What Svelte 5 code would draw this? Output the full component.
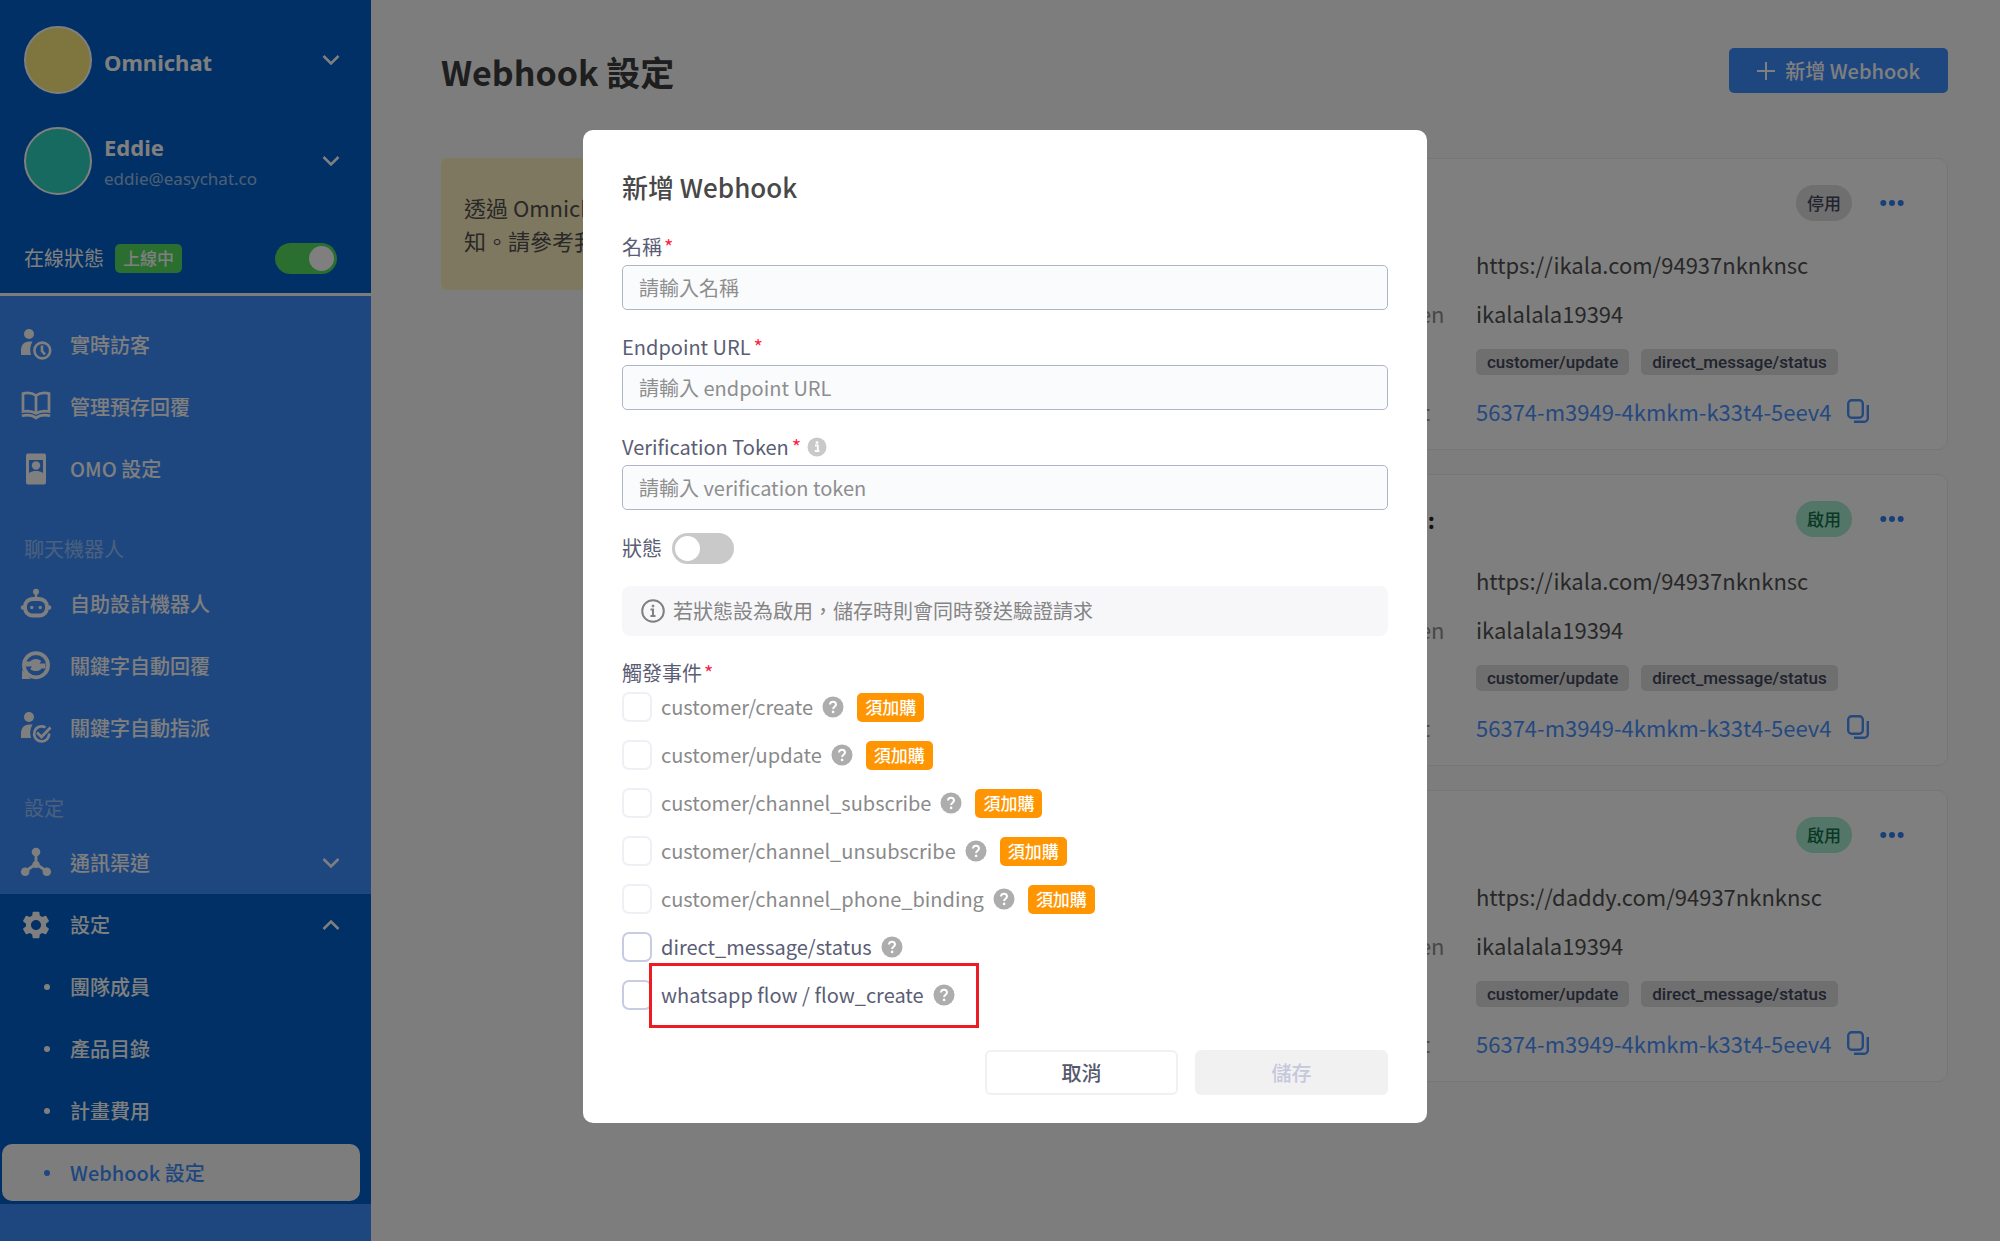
<script>
  const webhooks = [
    { name: 'iKala', on: false, url: 'https://ikala.com/94937nknknsc' },
    { name: 'iKala Webhook :', on: true, url: 'https://ikala.com/94937nknknsc' },
    { name: 'Daddy', on: true, url: 'https://daddy.com/94937nknknsc' }
  ];

  const groups = [
    {
      title: '',
      items: [
        { icon: 'visitor', label: '實時訪客' },
        { icon: 'book', label: '管理預存回覆' },
        { icon: 'omo', label: 'OMO 設定' }
      ]
    },
    {
      title: '聊天機器人',
      items: [
        { icon: 'robot', label: '自助設計機器人' },
        { icon: 'reply', label: '關鍵字自動回覆' },
        { icon: 'assign', label: '關鍵字自動指派' }
      ]
    },
    {
      title: '設定',
      items: [{ icon: 'hub', label: '通訊渠道', expandable: true }]
    }
  ];

  const settings = [
    { label: '團隊成員' },
    { label: '產品目錄' },
    { label: '計畫費用' },
    { label: 'Webhook 設定', current: true }
  ];

  const fields = [
    { id: 'name', label: '名稱', hint: '請輸入名稱' },
    { id: 'endpoint', label: 'Endpoint URL', hint: '請輸入 endpoint URL' },
    { id: 'token', label: 'Verification Token', hint: '請輸入 verification token', info: true }
  ];

  const events = [
    { name: 'customer/create', paid: true },
    { name: 'customer/update', paid: true },
    { name: 'customer/channel_subscribe', paid: true },
    { name: 'customer/channel_unsubscribe', paid: true },
    { name: 'customer/channel_phone_binding', paid: true },
    { name: 'direct_message/status' },
    { name: 'whatsapp flow / flow_create', marked: true }
  ];
</script>

{#snippet chevron(up)}
  <svg class="chevron" viewBox="0 0 18 18" aria-hidden="true">
    <path d={up ? 'M1.500 13l7.500-7.500 7.500 7.500' : 'M1.500 5l7.500 7.500 7.500-7.500'} fill="none" stroke="currentColor" stroke-width="2.500" />
  </svg>
{/snippet}

{#snippet navIcon(kind)}
  <svg class="nav-icon" viewBox="0 0 32 32" fill="currentColor" aria-hidden="true">
    {#if kind === 'visitor'}
      <circle cx="9" cy="5" r="5" />
      <path d="M1 26v-4c0-6 3-9.500 8-9.500h3.500c-2.500 4-3 9-1.500 13.500z" />
      <circle cx="22.300" cy="21.500" r="7.900" fill="none" stroke="currentColor" stroke-width="2.600" />
      <path d="M22 16.500v5.500l3 3.500" fill="none" stroke="currentColor" stroke-width="2.600" />
    {:else if kind === 'book'}
      <path d="M16 4.500C12 1.800 7 1.600 3 2.500V20.500C7.500 19.600 12 19.800 16 22.500C20 19.800 24.500 19.600 29 20.500V2.500C25 1.600 20 1.800 16 4.500zV22" fill="none" stroke="currentColor" stroke-width="2.700" />
      <path d="M1.800 24.800c6-1.200 10.500-.8 14.200 2.200c3.700-3 8.200-3.400 14.200-2.200" fill="none" stroke="currentColor" stroke-width="2.700" />
    {:else if kind === 'omo'}
      <path fill-rule="evenodd" d="M8 .5h16a2 2 0 0 1 2 2v27a2 2 0 0 1-2 2H8a2 2 0 0 1-2-2v-27a2 2 0 0 1 2-2zM9 7v13c4-2.600 10-2.600 14 0V7z" />
      <circle cx="16" cy="12.500" r="4.200" />
    {:else if kind === 'robot'}
      <circle cx="16" cy="3.700" r="3" />
      <path d="M14.800 5h2.400v6h-2.400z" />
      <rect x="5" y="11" width="22" height="16.500" rx="7.500" fill="none" stroke="currentColor" stroke-width="3.800" />
      <circle cx="3" cy="19.500" r="2.300" />
      <circle cx="29" cy="19.500" r="2.300" />
      <circle cx="11.800" cy="19.500" r="1.700" />
      <circle cx="20.200" cy="19.500" r="1.700" />
    {:else if kind === 'reply'}
      <circle cx="16" cy="15.200" r="12.100" fill="none" stroke="currentColor" stroke-width="3.700" />
      <path d="M2 20v9h9z" />
      <path d="M6 11.500h4c2.500-3.200 8-3.600 11.300-.5l-1.800 2.500h6v5h-4c-2.500 3.200-8 3.600-11.300.5l1.800-2.500H6z" />
    {:else if kind === 'assign'}
      <circle cx="9" cy="5" r="5" />
      <path d="M1 26v-4c0-6 3-9.500 8-9.500h3.500c-2.500 4-3 9-1.500 13.500z" />
      <path d="M25.500 15.500a7.500 7.500 0 1 0 3.600 6" fill="none" stroke="currentColor" stroke-width="2.600" />
      <path d="M17 20.500l4.500 4.500 9-9.500" fill="none" stroke="currentColor" stroke-width="2.800" />
    {:else if kind === 'hub'}
      <path d="M16 6v11L5 24.500M16 17l11 7.500" fill="none" stroke="currentColor" stroke-width="2.800" />
      <circle cx="16" cy="5" r="4.300" />
      <circle cx="16" cy="17.500" r="3.600" />
      <circle cx="5.200" cy="24.700" r="4.300" />
      <circle cx="26.800" cy="24.700" r="4.300" />
    {/if}
  </svg>
{/snippet}

{#snippet help()}
  <svg class="help" viewBox="0 0 22 22" aria-hidden="true">
    <circle cx="11" cy="11" r="10.500" fill="#adadad" />
    <path d="M8 8.600c0-3.800 6-3.800 6 0c0 2.100-2.900 2.200-2.900 4.300" fill="none" stroke="#fff" stroke-width="2" />
    <circle cx="11.100" cy="15.900" r="1.300" fill="#fff" />
  </svg>
{/snippet}

<div class="app">
  <aside class="sidebar">
    <div class="account">
      <button class="profile">
        <span class="avatar yellow"></span>
        <span class="who"><strong>Omnichat</strong></span>
        {@render chevron(false)}
      </button>
      <button class="profile">
        <span class="avatar teal"></span>
        <span class="who"><strong>Eddie</strong><span class="email">eddie@easychat.co</span></span>
        {@render chevron(false)}
      </button>
      <div class="presence">
        <label for="online">在線狀態</label>
        <span class="tag green">上線中</span>
        <input id="online" class="switch" type="checkbox" checked />
      </div>
    </div>

    <nav>
      {#each groups as group}
        {#if group.title}<h2>{group.title}</h2>{/if}
        {#each group.items as item}
          <a class="row" href="#{item.icon}">
            {@render navIcon(item.icon)}
            <span class="text">{item.label}</span>
            {#if item.expandable}{@render chevron(false)}{/if}
          </a>
        {/each}
      {/each}
      <div class="open">
        <a class="row" href="#settings">
          <svg class="nav-icon" viewBox="0.5 0.5 23 23" fill="currentColor" aria-hidden="true">
            <path d="M19.140 12.940c.04-.3.060-.610.060-.940 0-.320-.020-.640-.070-.940l2.030-1.580c.180-.140.230-.410.120-.610l-1.920-3.320c-.120-.220-.370-.290-.590-.220l-2.390.960c-.5-.380-1.030-.7-1.620-.940l-.360-2.540c-.040-.240-.240-.410-.480-.410h-3.840c-.240 0-.430.170-.470.410l-.360 2.540c-.590.240-1.130.570-1.620.940l-2.390-.960c-.220-.080-.470 0-.590.220L2.740 8.870c-.120.210-.080.470.120.610l2.030 1.580c-.050.3-.090.630-.090.940s.020.640.070.940l-2.030 1.580c-.180.140-.230.410-.120.610l1.920 3.320c.120.220.370.290.590.220l2.390-.960c.5.380 1.030.7 1.620.940l.360 2.540c.050.240.240.410.480.410h3.840c.240 0 .440-.170.470-.410l.360-2.540c.590-.240 1.130-.560 1.620-.940l2.390.960c.220.080.470 0 .590-.220l1.920-3.320c.120-.220.070-.470-.120-.610l-2.010-1.580zM12 15.600c-1.980 0-3.600-1.620-3.600-3.600s1.620-3.600 3.600-3.600 3.600 1.620 3.600 3.600-1.620 3.600-3.600 3.600z" />
          </svg>
          <span class="text">設定</span>
          {@render chevron(true)}
        </a>
        {#each settings as item}
          <a class="row sub" class:current={item.current} href="#{item.label}">
            <span class="dot"></span>
            <span class="text">{item.label}</span>
          </a>
        {/each}
      </div>
    </nav>
  </aside>

  <main>
    <header>
      <h1>Webhook 設定</h1>
      <button class="add">
        <svg viewBox="0 0 18 18" aria-hidden="true"><path d="M9 0v18M0 9h18" stroke="currentColor" stroke-width="2" /></svg>
        新增 Webhook
      </button>
    </header>
    <div class="content">
      <p class="note">透過 Omnichat Webhook，您可以在指定事件發生時收到即時通<br />知。請參考我們的 Webhook 文件以了解更多。</p>
      <div class="cards">
        {#each webhooks as hook}
          <article>
            <div class="card-head">
              <h3>{hook.name}</h3>
              <span class="state" class:on={hook.on}>{hook.on ? '啟用' : '停用'}</span>
              <button class="more" aria-label="更多">
                <svg viewBox="0 0 24 8" fill="currentColor"><circle cx="3.300" cy="4" r="3" /><circle cx="12" cy="4" r="3" /><circle cx="20.700" cy="4" r="3" /></svg>
              </button>
            </div>
            <dl>
              <dt>Endpoint URL</dt>
              <dd>{hook.url}</dd>
              <dt>Verification Token</dt>
              <dd>ikalalala19394</dd>
              <dt>觸發事件</dt>
              <dd><span class="chip">customer/update</span><span class="chip">direct_message/status</span></dd>
              <dt>Signature Secret</dt>
              <dd class="secret">
                <span>56374-m3949-4kmkm-k33t4-5eev4</span>
                <button class="copy" aria-label="複製">
                  <svg viewBox="0 0 22 24" fill="none" stroke="currentColor" stroke-width="2.400">
                    <rect x="1.200" y="1.200" width="14.600" height="17.600" rx="3.500" />
                    <path d="M20.800 6v13.300a3.500 3.500 0 0 1-3.500 3.500H7" />
                  </svg>
                </button>
              </dd>
            </dl>
          </article>
        {/each}
      </div>
    </div>
  </main>
</div>

<div class="overlay">
  <div class="modal" role="dialog" aria-modal="true" aria-labelledby="dialog-title">
    <h2 id="dialog-title">新增 Webhook</h2>

    {#each fields as field}
      <div class="field">
        <label for={field.id}>
          <span>{field.label}<i>*</i></span>
          {#if field.info}
            <svg viewBox="0 0 20 20" aria-hidden="true">
              <circle cx="10" cy="10" r="9.500" fill="#c9c9c9" />
              <path d="M8 8.500h2.800v5.500M7.800 14h4.600" fill="none" stroke="#fff" stroke-width="1.800" />
              <circle cx="10" cy="5.600" r="1.400" fill="#fff" />
            </svg>
          {/if}
        </label>
        <input id={field.id} type="text" placeholder={field.hint} />
      </div>
    {/each}

    <div class="status">
      <label for="enabled">狀態</label>
      <input id="enabled" class="switch" type="checkbox" />
    </div>

    <p class="info">
      <svg viewBox="0 0 24 24" fill="none" stroke="#808080" stroke-width="2" aria-hidden="true">
        <circle cx="12" cy="12" r="10.800" />
        <path d="M9.500 10.500H12V17M9.500 17h5" />
        <circle cx="12" cy="7" r="1" fill="#808080" stroke-width="1" />
      </svg>
      若狀態設為啟用，儲存時則會同時發送驗證請求
    </p>

    <fieldset>
      <legend>觸發事件<i>*</i></legend>
      {#each events as event}
        <div class="event" class:locked={event.paid}>
          <label>
            <input type="checkbox" disabled={event.paid} />
            <span class="name" class:marked={event.marked}>{event.name}{@render help()}</span>
          </label>
          {#if event.paid}<span class="tag orange">須加購</span>{/if}
        </div>
      {/each}
    </fieldset>

    <div class="actions">
      <button class="cancel">取消</button>
      <button class="save" disabled>儲存</button>
    </div>
  </div>
</div>

<style>
  :global(body) {
    background: #fafafa;
  }

  .app,
  .overlay {
    font-family: 'Noto Sans CJK TC', sans-serif;
    font-size: 20px;
    line-height: 24px;
  }

  .app *,
  .overlay,
  .overlay * {
    box-sizing: border-box;
  }

  button,
  input {
    font: inherit;
    color: inherit;
    margin: 0;
  }

  button {
    border: 0;
    padding: 0;
    background: none;
  }

  a {
    color: inherit;
    text-decoration: none;
  }

  h1,
  h2,
  h3,
  p,
  dl,
  dd {
    margin: 0;
  }

  .app {
    display: flex;
    min-height: 100vh;
  }

  .sidebar {
    flex: 0 0 371px;
    background: #3e8eff;
    color: #fff;
  }

  .account {
    display: flex;
    flex-direction: column;
    padding: 26px 34px 19px 24px;
    background: #0060cc;
    border-bottom: 3px solid #fafafa;
  }

  .profile {
    display: flex;
    align-items: center;
    gap: 12px;
    margin-bottom: 33px;
    text-align: left;
    font-family: 'Noto Sans', sans-serif;
  }

  .profile:nth-child(2) {
    margin-bottom: 47px;
  }

  .avatar {
    width: 68px;
    height: 68px;
    border: 2px solid #fff;
    border-radius: 50%;
  }

  .yellow {
    background: #ffea7e;
  }

  .teal {
    background: #2cd4c0;
  }

  .who {
    flex: 1;
    display: flex;
    flex-direction: column;
    padding-top: 4px;
  }

  .who strong {
    font-size: 22px;
    line-height: 32px;
  }

  .email {
    font-size: 17px;
    line-height: 32px;
    opacity: 0.6;
  }

  .chevron {
    width: 18px;
    height: 18px;
    margin-right: -3px;
  }

  .presence {
    display: flex;
    align-items: center;
    height: 32px;
    gap: 11px;
  }

  .presence .switch {
    margin-left: auto;
  }

  .tag {
    display: flex;
    align-items: center;
    height: 29px;
    padding: 0 8px;
    border-radius: 5px;
    color: #fff;
    font-size: 17px;
    font-weight: 500;
  }

  .green {
    background: #54dc60;
  }

  .orange {
    background: #ff9500;
  }

  .switch {
    appearance: none;
    display: flex;
    align-items: center;
    width: 62px;
    height: 31px;
    padding: 3px;
    border-radius: 16px;
    background: #c9c9c9;
  }

  .switch::before {
    content: '';
    width: 25px;
    height: 25px;
    border-radius: 50%;
    background: #fff;
  }

  .switch:checked {
    justify-content: flex-end;
    background: #54dc60;
  }

  nav {
    padding-top: 18px;
    font-weight: 500;
  }

  nav h2 {
    margin-top: 24px;
    padding-left: 24px;
    font-size: 20px;
    line-height: 49px;
    font-weight: 400;
    opacity: 0.45;
  }

  .row {
    display: flex;
    align-items: center;
    gap: 18px;
    height: 62px;
    padding: 0 34px 0 20px;
  }

  .row .text {
    flex: 1;
  }

  .nav-icon {
    width: 32px;
    height: 32px;
  }

  .open {
    padding-bottom: 3px;
    background: #0060cc;
  }

  .row.sub {
    gap: 20px;
    padding-left: 44px;
  }

  .dot {
    width: 6px;
    height: 6px;
    border-radius: 50%;
    background: currentColor;
  }

  .row.current {
    height: 57px;
    margin: 2px 11px 0 2px;
    padding-left: 42px;
    border-radius: 10px;
    background: #fafafa;
    color: #3e8eff;
  }

  main {
    flex: 1;
    min-width: 0;
    padding: 48px 52px 48px 70px;
    color: #505050;
  }

  header {
    display: flex;
    align-items: center;
    justify-content: space-between;
    margin-bottom: 65px;
  }

  h1 {
    padding-top: 3px;
    font-size: 34px;
    line-height: 42px;
    color: #3c3c3c;
  }

  .add {
    display: flex;
    align-items: center;
    gap: 10px;
    height: 45px;
    padding: 0 28px;
    border-radius: 5px;
    background: #3e8eff;
    color: #fff;
    font-weight: 500;
  }

  .add svg {
    width: 18px;
    height: 18px;
  }

  .content {
    display: grid;
    grid-template-columns: minmax(0, 757fr) minmax(0, 718fr);
    gap: 32px;
    align-items: start;
  }

  .note {
    padding: 33px 23px;
    border-radius: 6px;
    background: #fff1c0;
    font-size: 22px;
    line-height: 33px;
    white-space: nowrap;
    overflow: hidden;
  }

  .cards {
    display: flex;
    flex-direction: column;
    gap: 24px;
  }

  article {
    padding: 26px 43px 21px 30px;
    border: 1px solid #ebebf5;
    border-radius: 10px;
    background: #fff;
  }

  .card-head {
    display: flex;
    align-items: center;
    margin-bottom: 27px;
  }

  h3 {
    flex: 1;
    font-size: 22px;
    line-height: 36px;
    color: #222;
  }

  .state {
    height: 36px;
    padding: 0 11px;
    border-radius: 18px;
    background: #dedede;
    color: #42465c;
    font-size: 17px;
    line-height: 36px;
    font-weight: 500;
  }

  .state.on {
    background: #a6ecd0;
    color: #167048;
  }

  .more {
    width: 24px;
    height: 24px;
    margin-left: 28px;
    color: #2f80f0;
  }

  .more svg {
    display: block;
    width: 24px;
    height: 8px;
  }

  dl {
    display: grid;
    grid-template-columns: 215px 1fr;
    row-gap: 17px;
    padding-bottom: 1px;
    font-size: 22px;
    line-height: 32px;
  }

  dt {
    color: #909090;
  }

  dd {
    display: flex;
    align-items: center;
    gap: 12px;
    height: 32px;
  }

  .chip {
    height: 26px;
    padding: 0 11px;
    border-radius: 5px;
    background: #dedede;
    color: #42465c;
    font-family: Roboto, sans-serif;
    font-size: 17px;
    line-height: 26px;
    font-weight: 500;
  }

  .secret {
    gap: 16px;
    color: #4a92ff;
  }

  .copy svg {
    display: block;
    width: 22px;
    height: 24px;
  }

  .overlay {
    position: fixed;
    inset: 0;
    display: flex;
    align-items: flex-start;
    justify-content: center;
    padding: 130px 20px 20px 30px;
    overflow: auto;
    background: rgba(0, 0, 0, 0.5);
  }

  .modal {
    width: 100%;
    max-width: 844px;
    padding: 41px 39px 28px;
    border-radius: 10px;
    background: #fff;
    color: #5a5d75;
  }

  .modal h2 {
    margin-bottom: 32px;
    color: #484848;
    font-size: 26px;
    line-height: 32px;
    font-weight: 500;
  }

  .modal i {
    margin-left: 2px;
    color: #ff1f44;
    font-style: normal;
  }

  .field {
    margin-bottom: 25px;
  }

  .field label {
    display: flex;
    align-items: center;
    gap: 6px;
    margin-bottom: 6px;
  }

  .field + .field label i {
    margin-left: 3px;
  }

  .field svg {
    width: 20px;
    height: 20px;
  }

  .field input {
    display: block;
    width: 100%;
    height: 45px;
    padding: 0 16px;
    border: 1px solid #aeb5c6;
    border-radius: 5px;
    background: #fafbfd;
  }

  .field input::placeholder {
    color: #8e8e8e;
    opacity: 1;
  }

  .status {
    display: flex;
    align-items: center;
    gap: 10px;
    height: 32px;
    margin-top: -3px;
  }

  .info {
    display: flex;
    align-items: center;
    gap: 8px;
    height: 50px;
    margin: 22px 0 25px;
    padding: 0 19px;
    border-radius: 8px;
    background: #f7f7fa;
    color: #858585;
  }

  .info svg {
    width: 24px;
    height: 24px;
  }

  fieldset {
    display: flex;
    flex-direction: column;
    gap: 18px;
    margin: 0 0 40px;
    padding: 0;
    border: 0;
  }

  legend {
    margin-bottom: 7px;
    padding: 0;
  }

  .event {
    display: flex;
    align-items: center;
    gap: 13px;
    height: 30px;
  }

  .event label {
    display: flex;
    align-items: center;
    gap: 9px;
  }

  .event input {
    appearance: none;
    width: 30px;
    height: 30px;
    border: 2px solid #c8cce2;
    border-radius: 7px;
    background: #fff;
  }

  .locked {
    color: #8a8a8a;
  }

  .locked input {
    border-color: #eef0f6;
  }

  .name {
    position: relative;
    display: flex;
    align-items: center;
    gap: 9px;
    line-height: 30px;
  }

  .marked::after {
    content: '';
    position: absolute;
    inset: -17px -24px -18px -12px;
    border: 3px solid #ed1c24;
  }

  .help {
    width: 22px;
    height: 22px;
  }

  .actions {
    display: flex;
    justify-content: flex-end;
    gap: 17px;
  }

  .actions button {
    width: 193px;
    height: 45px;
    border-radius: 6px;
    font-weight: 500;
  }

  .cancel {
    border: 2px solid #f1f1f1;
    color: #55586c;
  }

  .save {
    background: #f1f1f1;
    color: #c5c8dc;
  }
</style>
